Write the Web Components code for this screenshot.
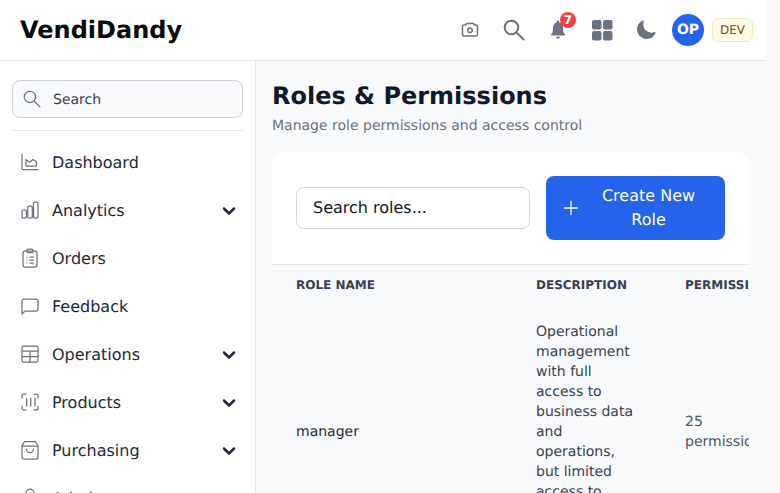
<!DOCTYPE html>
<html>
<head>
<meta charset="utf-8">
<style>
html, body { margin: 0; height: 100%; overflow: hidden; background: #f9fafb; }
body { font-family: "DejaVu Sans", sans-serif; color: #111827; text-rendering: geometricPrecision; }
</style>
</head>
<body>
<vd-app></vd-app>

<script>
const ICONS = {
    camera: `<path d="M5.500 5 6.500 3.500h7L14.500 5H16a1.500 1.500 0 0 1 1.500 1.500v8A1.500 1.500 0 0 1 16 16H4a1.500 1.500 0 0 1-1.500-1.500v-8A1.500 1.500 0 0 1 4 5z"/><circle cx="10" cy="10.300" r="2.300"/>`,
    search: `<circle cx="9.500" cy="9.500" r="6.800"/><path d="m15 15 6.500 6.500"/>`,
    chart: `<path d="M2 2v14.500a1 1 0 0 0 1 1h15"/><path d="M6 14V7.500l3.500 2.700L13 7.500l3.500 2.500V14z"/>`,
    bars: `<rect x="2" y="10" width="4.500" height="8" rx="1.300"/><rect x="7.800" y="6" width="4.500" height="12" rx="1.300"/><rect x="13.500" y="2" width="4.500" height="16" rx="1.300"/>`,
    clipboard: `<rect x="3" y="3" width="14" height="16" rx="2"/><rect x="7" y="1" width="6" height="3.500" rx="1"/><path d="M6.800 9h.01M6.800 12h.01M6.800 15h.01M10 9h3.500M10 12h3.500M10 15h3.500"/>`,
    chat: `<path d="M2 18V5a2 2 0 0 1 2-2h12a2 2 0 0 1 2 2v8a2 2 0 0 1-2 2H5z"/>`,
    table: `<rect x="2" y="2" width="16" height="16" rx="1.500"/><path d="M2 7h16M2 12.500h16M10 7v11"/>`,
    barcode: `<path d="M2 6V4a2 2 0 0 1 2-2h2M14 2h2a2 2 0 0 1 2 2v2M18 14v2a2 2 0 0 1-2 2h-2M6 18H4a2 2 0 0 1-2-2v-2M6.700 6v8M10.700 6v8M15 6v8"/>`,
    bag: `<path d="M4.500 1.500h11L18 6v11a2 2 0 0 1-2 2H4a2 2 0 0 1-2-2V6z"/><path d="M2 6h16M6.500 9a3.500 3.500 0 0 0 7 0"/>`,
    user: `<circle cx="10" cy="5" r="3.800"/><path d="M3 18a7 7 0 0 1 14 0z"/>`
};

class VdIcon extends HTMLElement {
    connectedCallback() {
        const size = this.getAttribute("size") || 20;
        const width = this.getAttribute("stroke") || 1.25;
        const box = this.getAttribute("box") || 20;
        const name = this.getAttribute("name");
        this.attachShadow({ mode: "open" }).innerHTML = `
        <style>
          :host { display: inline-flex; flex-shrink: 0; color: inherit; }
          svg { display: block; }
        </style>
        <svg width="${size}" height="${size}" viewBox="0 0 ${box} ${box}" fill="none" stroke="currentColor"
             stroke-width="${width}" stroke-linecap="round" stroke-linejoin="round">${ICONS[name]}</svg>`;
    }
}

class VdHeader extends HTMLElement {
    constructor() {
        super();
        this.attachShadow({ mode: "open" }).innerHTML = `
        <style>
          :host {
            display: flex; align-items: center; box-sizing: border-box;
            height: 61px; background: #fff; border-bottom: 1px solid #e5e7eb;
            padding: 0 12px 0 20px;
          }
          .logo { font-size: 24px; font-weight: 700; line-height: 30px; color: #0a0a0a; flex: 1; }
          .tools { display: flex; align-items: center; color: #6b7280; }
          .slot { width: 44px; height: 40px; display: flex; align-items: center; justify-content: center; position: relative; }
          .badge {
            position: absolute; top: 2px; left: 24px; width: 16px; height: 16px; border-radius: 50%;
            background: #ef4444; color: #fff; font-size: 12px; font-weight: 700; line-height: 16px; text-align: center;
          }
          .avatar {
            width: 32px; height: 32px; border-radius: 50%; background: #2563eb; color: #fff;
            font-size: 14px; font-weight: 700; line-height: 32px; text-align: center; margin: 0 8px 0 4px;
          }
          .dev {
            box-sizing: border-box; width: 41px; height: 24px; border-radius: 6px; background: #fefce8;
            border: 1px solid #f5e9b8; color: #854d0e; font-size: 12px; line-height: 22px; text-align: center;
          }
        </style>
        <div class="logo">VendiDandy</div>
        <div class="tools">
          <div class="slot"><vd-icon name="camera" size="20" stroke="1.500"></vd-icon></div>
          <div class="slot"><vd-icon name="search" size="24" box="24" stroke="2"></vd-icon></div>
          <div class="slot">
            <svg width="20" height="20" viewBox="0 0 20 20" fill="currentColor"><path d="M10 .5a1.200 1.200 0 0 1 1.200 1.200v.6C13.500 3 15 5.300 15 8c0 3 .6 5 2 6.500.3.400.1 1-.5 1h-13c-.6 0-.8-.6-.5-1C5 13 5 11 5 8c0-2.700 1.500-5 3.800-5.700v-.6A1.200 1.200 0 0 1 10 .5z"/><path d="M8 16.800h4a2 2 0 0 1-4 0z"/></svg>
            <span class="badge">7</span>
          </div>
          <div class="slot">
            <svg width="24" height="24" viewBox="0 0 24 24" fill="currentColor"><rect x="2" y="2" width="9.500" height="9.500" rx="2"/><rect x="13" y="2" width="9.500" height="9.500" rx="2"/><rect x="2" y="13" width="9.500" height="9.500" rx="2"/><rect x="13" y="13" width="9.500" height="9.500" rx="2"/></svg>
          </div>
          <div class="slot">
            <svg width="22" height="22" viewBox="0 0 24 24" fill="currentColor"><path d="M9.528 1.718a.75.75 0 0 1 .162.819A8.970 8.970 0 0 0 9 6a9 9 0 0 0 9 9 8.970 8.970 0 0 0 3.463-.69.75.75 0 0 1 .981.980 10.503 10.503 0 0 1-9.694 6.460c-5.799 0-10.500-4.701-10.500-10.500 0-4.368 2.667-8.112 6.460-9.694a.75.75 0 0 1 .818.162z"/></svg>
          </div>
          <div class="avatar">OP</div>
          <div class="dev">DEV</div>
        </div>`;
    }
}

class VdNavItem extends HTMLElement {
    connectedCallback() {
        const chevron = this.hasAttribute("expandable")
            ? `<svg class="chev" width="20" height="20" viewBox="0 0 20 20" fill="none" stroke="#1f2937" stroke-width="2.500" stroke-linecap="round" stroke-linejoin="round"><path d="m5 7.500 5 5 5-5"/></svg>`
            : "";
        this.attachShadow({ mode: "open" }).innerHTML = `
        <style>
          :host {
            display: flex; align-items: center; height: 48px; box-sizing: border-box;
            padding: 0 4px 0 8px; font-size: 16px; color: #1f2937;
          }
          vd-icon { color: #6b7280; margin-right: 12px; }
          .label { flex: 1; }
          .chev { margin-top: 2px; }
        </style>
        <vd-icon name="${this.getAttribute("icon")}"></vd-icon>
        <span class="label"><slot></slot></span>
        ${chevron}`;
    }
}

class VdSidebar extends HTMLElement {
    constructor() {
        super();
        this.attachShadow({ mode: "open" }).innerHTML = `
        <style>
          :host {
            display: block; box-sizing: border-box; width: 256px; flex-shrink: 0; background: #fff;
            border-right: 1px solid #e5e7eb; padding: 19px 12px 0; overflow: hidden;
          }
          .search {
            display: flex; align-items: center; box-sizing: border-box; height: 38px; width: 231px;
            background: #f9fafb; border: 1px solid #d1d5db; border-radius: 8px; padding: 0 9px;
            font-size: 14px; line-height: 20px; color: #374151;
          }
          .search vd-icon { color: #6b7280; margin-right: 11px; }
          .search span { padding-top: 1px; }
          hr { border: 0; border-top: 1px solid #e5e7eb; margin: 12px 0 7px; }
          nav { display: block; }
        </style>
        <div class="search"><vd-icon name="search" size="20" box="24" stroke="1.500"></vd-icon><span>Search</span></div>
        <hr>
        <nav><slot></slot></nav>`;
    }
}

class VdRolesCard extends HTMLElement {
    constructor() {
        super();
        this.attachShadow({ mode: "open" }).innerHTML = `
        <style>
          :host {
            display: block; box-sizing: border-box; width: 477px; background: #fff; border-radius: 12px;
            box-shadow: 0 1px 2px rgba(0,0,0,.05); overflow: hidden;
          }
          .toolbar { display: flex; align-items: center; gap: 16px; padding: 24px; border-bottom: 1px solid #e5e7eb; }
          .input {
            box-sizing: border-box; width: 234px; height: 42px; border: 1px solid #d1d5db; border-radius: 8px;
            padding: 1px 16px 0; font-size: 16px; line-height: 38px; color: #111827; background: #fff;
          }
          .create {
            display: flex; align-items: center; box-sizing: border-box; width: 179px; height: 64px;
            background: #2563eb; border-radius: 8px; padding: 0 17px 0 15px; color: #fff; font-size: 16px; line-height: 24px;
          }
          .create svg { flex-shrink: 0; }
          .create span { flex: 1; text-align: center; padding-left: 8px; }
          .scroll { overflow: hidden; }
          table { border-collapse: collapse; width: 700px; table-layout: fixed; background: #f9fafb; }
          th {
            font-size: 12px; font-weight: 700; text-transform: uppercase; color: #374151;
            text-align: left; padding: 12px 24px; line-height: 16px; white-space: nowrap;
          }
          td { padding: 17px 24px 16px; font-size: 14px; line-height: 20px; color: #1f2937; vertical-align: middle; }
          td.desc { color: #374151; }
          td.perm { color: #4b5563; }
        </style>
        <div class="toolbar">
          <div class="input">Search roles...</div>
          <div class="create">
            <svg width="20" height="20" viewBox="0 0 20 20" fill="none" stroke="currentColor" stroke-width="1.300" stroke-linecap="round"><path d="M10 3.500v13M3.500 10h13"/></svg>
            <span>Create New Role</span>
          </div>
        </div>
        <div class="scroll">
          <table>
            <colgroup><col style="width:240px"><col style="width:149px"><col style="width:130px"><col style="width:181px"></colgroup>
            <thead><tr><th>Role Name</th><th>Description</th><th>Permissions</th><th>Actions</th></tr></thead>
            <tbody>
              <tr>
                <td>manager</td>
                <td class="desc">Operational management with full access to business data and operations, but limited access to system settings</td>
                <td class="perm">25 permissions</td>
                <td></td>
              </tr>
            </tbody>
          </table>
        </div>`;
    }
}

class VdMain extends HTMLElement {
    constructor() {
        super();
        this.attachShadow({ mode: "open" }).innerHTML = `
        <style>
          :host { display: block; flex: 1; min-width: 0; box-sizing: border-box; padding: 16px; overflow: hidden; }
          h1 { margin: 1px 0 0; font-size: 24px; line-height: 36px; font-weight: 700; color: #111827; }
          p { margin: 2px 0 16px; font-size: 14px; line-height: 20px; color: #6b7280; }
        </style>
        <h1>Roles &amp; Permissions</h1>
        <p>Manage role permissions and access control</p>
        <slot></slot>`;
    }
}

class VdApp extends HTMLElement {
    constructor() {
        super();
        this.attachShadow({ mode: "open" }).innerHTML = `
        <style>
          :host { display: flex; width: 780px; height: 493px; overflow: hidden; }
          .page { width: 765px; flex-shrink: 0; display: flex; flex-direction: column; }
          .body { display: flex; flex: 1; min-height: 0; }
          .track { flex: 1; background: #f9fafb; }
        </style>
        <div class="page">
          <vd-header></vd-header>
          <div class="body">
            <vd-sidebar>
              <vd-nav-item icon="chart">Dashboard</vd-nav-item>
              <vd-nav-item icon="bars" expandable>Analytics</vd-nav-item>
              <vd-nav-item icon="clipboard">Orders</vd-nav-item>
              <vd-nav-item icon="chat">Feedback</vd-nav-item>
              <vd-nav-item icon="table" expandable>Operations</vd-nav-item>
              <vd-nav-item icon="barcode" expandable>Products</vd-nav-item>
              <vd-nav-item icon="bag" expandable>Purchasing</vd-nav-item>
              <vd-nav-item icon="user" expandable>Admin</vd-nav-item>
            </vd-sidebar>
            <vd-main><vd-roles-card></vd-roles-card></vd-main>
          </div>
        </div>
        <div class="track"></div>`;
    }
}

customElements.define("vd-icon", VdIcon);
customElements.define("vd-header", VdHeader);
customElements.define("vd-nav-item", VdNavItem);
customElements.define("vd-sidebar", VdSidebar);
customElements.define("vd-roles-card", VdRolesCard);
customElements.define("vd-main", VdMain);
customElements.define("vd-app", VdApp);
</script>
</body>
</html>
